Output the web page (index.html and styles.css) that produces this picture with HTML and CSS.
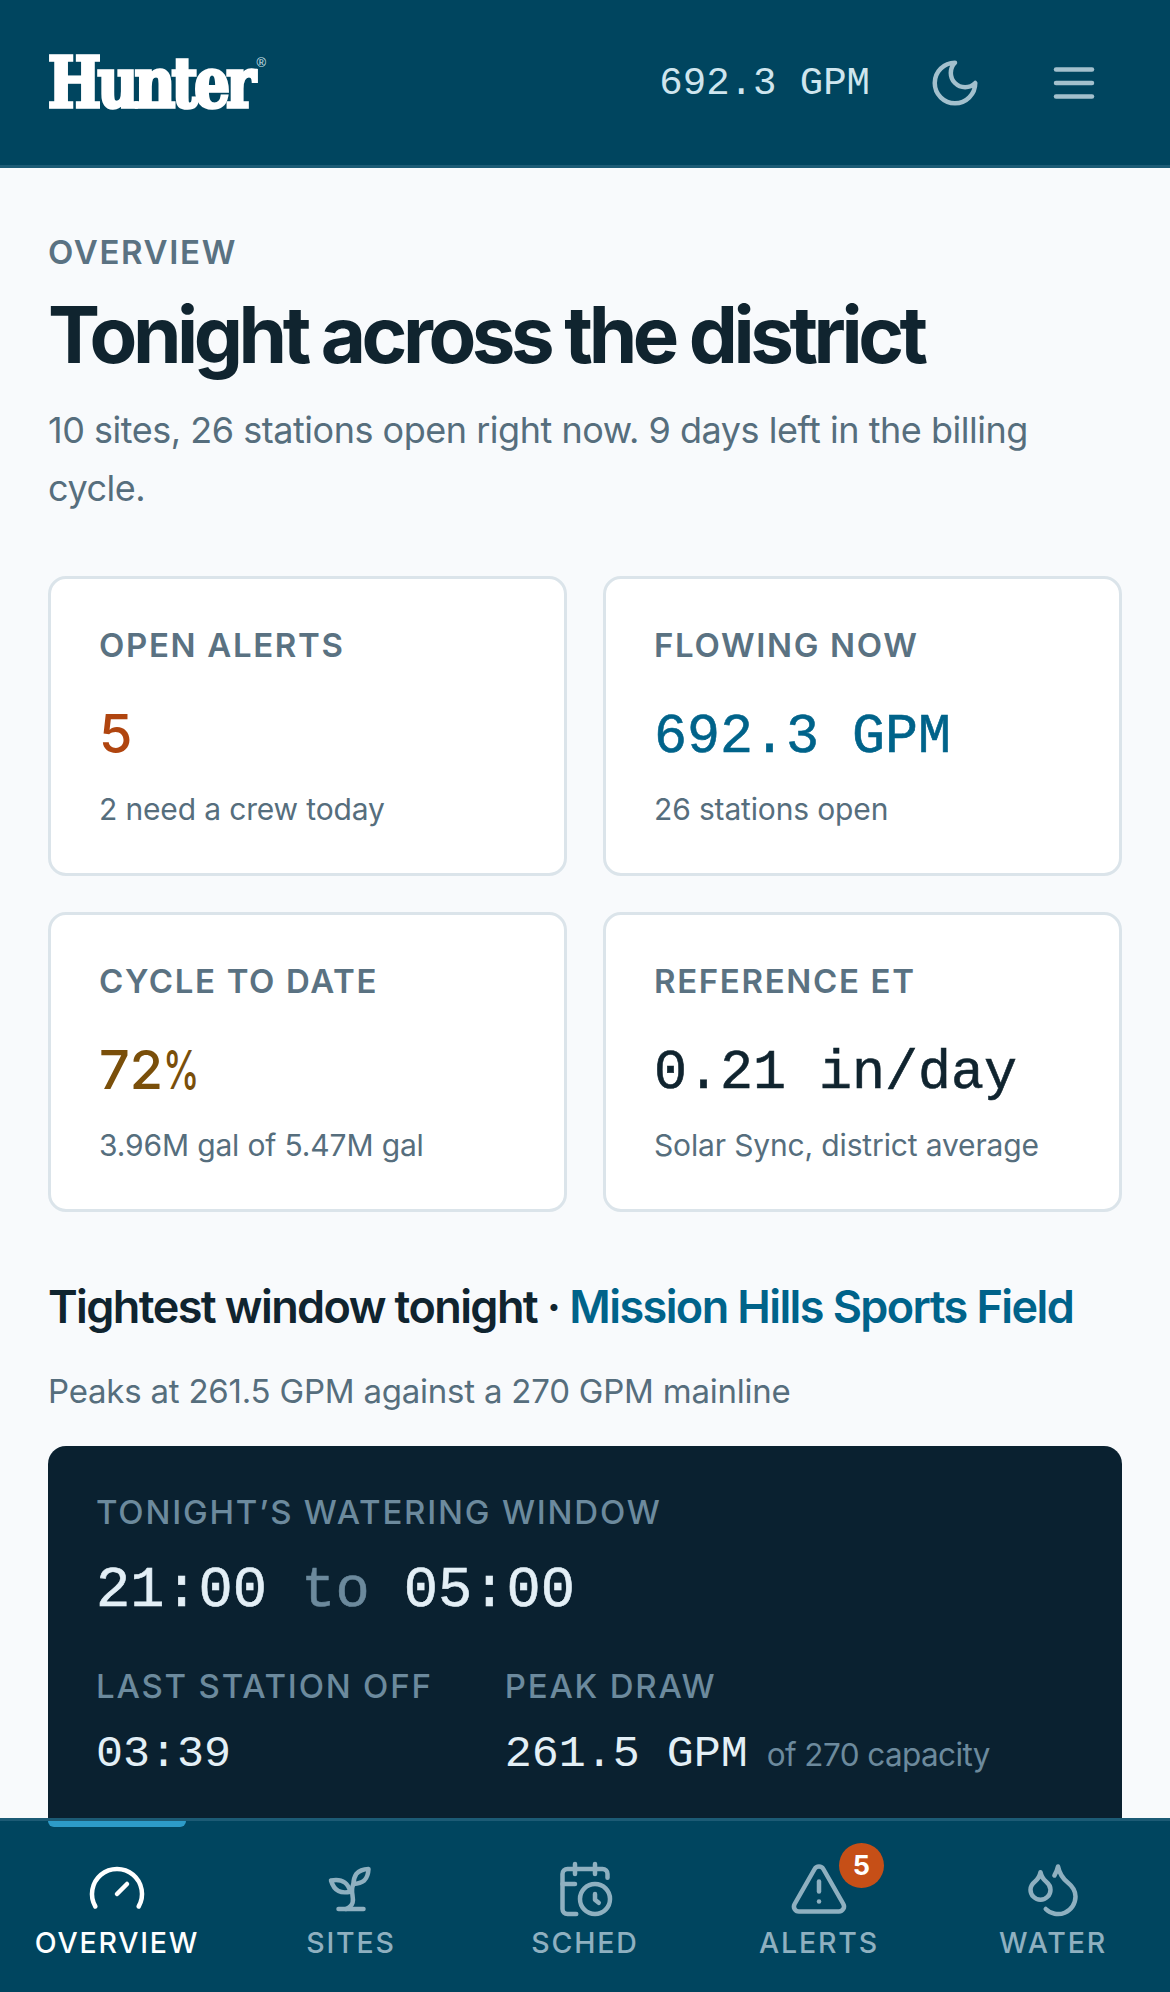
FILE: index.html
```html
<!DOCTYPE html>
<html lang="en">
<head>
  <meta charset="UTF-8" />
  <meta name="viewport" content="width=device-width, initial-scale=1" />
  <title>Hunter District Overview</title>
  <link rel="stylesheet" href="styles.css">
</head>
<body>
  <div class="app">
    <header class="topbar">
      <div class="logo"><span class="logo-word">Hunter</span><span class="logo-mark">®</span></div>
      <div class="topbar-right">
        <span class="topbar-flow">692.3 GPM</span>
        <svg class="topbar-icon" viewBox="0 0 24 24"><path d="M12 3a6 6 0 0 0 9 9 9 9 0 1 1-9-9Z"/></svg>
        <svg class="topbar-icon" viewBox="0 0 24 24"><path d="M4 6h16"/><path d="M4 12h16"/><path d="M4 18h16"/></svg>
      </div>
    </header>

    <main class="content">
      <p class="eyebrow">Overview</p>
      <h1>Tonight across the district</h1>
      <p class="lede">10 sites, 26 stations open right now. 9 days left in the billing cycle.</p>

      <section class="stats">
        <div class="stat">
          <div class="stat-label">Open alerts</div>
          <div class="stat-value alert">5</div>
          <div class="stat-note">2 need a crew today</div>
        </div>
        <div class="stat">
          <div class="stat-label">Flowing now</div>
          <div class="stat-value mono flow">692.3 GPM</div>
          <div class="stat-note">26 stations open</div>
        </div>
        <div class="stat">
          <div class="stat-label">Cycle to date</div>
          <div class="stat-value cycle">72<span class="pct">%</span></div>
          <div class="stat-note">3.96M gal of 5.47M gal</div>
        </div>
        <div class="stat">
          <div class="stat-label">Reference ET</div>
          <div class="stat-value mono">0.21 in/day</div>
          <div class="stat-note">Solar Sync, district average</div>
        </div>
      </section>

      <h2>Tightest window tonight · <a href="#">Mission Hills Sports Field</a></h2>
      <p class="section-note">Peaks at 261.5 GPM against a 270 GPM mainline</p>

      <section class="window">
        <div class="window-label">Tonight’s watering window</div>
        <div class="window-time">21:00 <span class="dim">to</span> 05:00</div>
        <div class="window-row">
          <div>
            <div class="window-label">Last station off</div>
            <div class="window-value">03:39</div>
          </div>
          <div>
            <div class="window-label">Peak draw</div>
            <div class="window-value">261.5 GPM<span class="window-cap">of 270 capacity</span></div>
          </div>
        </div>
      </section>
    </main>

    <nav class="tabs">
      <a class="tab active" href="#">
        <svg class="tab-icon" viewBox="0 0 24 24"><path d="m12 14 4-4"/><path d="M3.34 19a10 10 0 1 1 17.32 0"/></svg>
        Overview
      </a>
      <a class="tab" href="#">
        <svg class="tab-icon" viewBox="0 0 24 24"><path d="M7 20h10"/><path d="M10 20c5.5-2.5.8-6.4 3-10"/><path d="M9.5 9.4c1.1.8 1.8 2.2 2.3 3.7-2 .4-3.5.4-4.8-.3-1.2-.6-2.3-1.9-3-4.2 2.8-.5 4.4 0 5.5.8z"/><path d="M14.1 6a7 7 0 0 0-1.1 4c1.9-.1 3.3-.6 4.3-1.4 1-1 1.6-2.3 1.7-4.6-2.7.1-4 1-4.9 2z"/></svg>
        Sites
      </a>
      <a class="tab" href="#">
        <svg class="tab-icon" viewBox="0 0 24 24"><path d="M21 7.5V6a2 2 0 0 0-2-2H5a2 2 0 0 0-2 2v14a2 2 0 0 0 2 2h3.5"/><path d="M16 2v4"/><path d="M8 2v4"/><path d="M3 10h5"/><path d="M17.5 17.5 16 16.3V14"/><circle cx="16" cy="16" r="6"/></svg>
        Sched
      </a>
      <a class="tab" href="#">
        <span class="tab-icon-wrap">
          <svg class="tab-icon" viewBox="0 0 24 24"><path d="m21.73 18-8-14a2 2 0 0 0-3.48 0l-8 14A2 2 0 0 0 4 21h16a2 2 0 0 0 1.73-3"/><path d="M12 9v4"/><path d="M12 17h.01"/></svg>
          <span class="badge">5</span>
        </span>
        Alerts
      </a>
      <a class="tab" href="#">
        <svg class="tab-icon" viewBox="0 0 24 24"><path d="M7 16.3c2.2 0 4-1.83 4-4.05 0-1.16-.57-2.26-1.71-3.19S7.29 6.75 7 5.3c-.29 1.45-1.14 2.84-2.29 3.76S3 11.1 3 12.25c0 2.22 1.8 4.05 4 4.05z"/><path d="M12.56 6.6A10.97 10.97 0 0 0 14 3.02c.5 2.5 2 4.9 4 6.5s3 3.5 3 5.5a6.98 6.98 0 0 1-11.91 4.97"/></svg>
        Water
      </a>
    </nav>
  </div>
</body>
</html>
```

FILE: styles.css
```css
* {
  box-sizing: border-box;
}
body {
  margin: 0;
  font-family: Inter, "Liberation Sans", sans-serif;
  background: #f8fafc;
  color: #10242f;
}
.app {
  display: flex;
  flex-direction: column;
  height: 100vh;
  overflow: hidden;
}
.mono {
  font-family: "Liberation Mono", monospace;
}

/* top bar */
.topbar {
  flex: none;
  height: 168px;
  padding: 0 48px;
  display: flex;
  align-items: center;
  justify-content: space-between;
  background: #00455f;
  border-bottom: 3px solid #1c5b75;
}
.logo {
  display: flex;
  align-items: flex-start;
  color: #fff;
}
.logo-word {
  font-family: "DejaVu Serif", serif;
  font-stretch: condensed;
  font-weight: 700;
  font-size: 70px;
  line-height: 62px;
  letter-spacing: -4px;
  -webkit-text-stroke: 3.5px #fff;
  transform: scaleX(0.89);
  transform-origin: left center;
}
.logo-mark {
  margin: 4px 0 0 -21px;
  font-family: "Liberation Sans", sans-serif;
  font-size: 13px;
  line-height: 14px;
  color: #d4e6ee;
}
.topbar-right {
  display: flex;
  align-items: center;
  gap: 65px;
  margin-right: 21px;
}
.topbar-flow {
  margin-right: -7px;
  font-family: "Liberation Mono", monospace;
  font-size: 39px;
  line-height: 54px;
  padding-top: 3px;
  color: #cfe5ee;
}
.topbar-icon {
  width: 54px;
  height: 54px;
  fill: none;
  stroke: #a3c0cd;
  stroke-width: 2;
  stroke-linecap: round;
  stroke-linejoin: round;
}

/* page content */
.content {
  flex: 1;
  min-height: 0;
  overflow: hidden;
  padding: 66px 48px 0;
}
.eyebrow {
  margin: 0;
  font-size: 33px;
  line-height: 36px;
  font-weight: 600;
  letter-spacing: 1.65px;
  text-transform: uppercase;
  color: #5a7282;
}
h1 {
  margin: 23px 0 0;
  font-size: 78px;
  line-height: 84px;
  font-weight: 700;
  letter-spacing: -4.45px;
  color: #10242f;
}
.lede {
  margin: 25px 0 0;
  font-size: 36px;
  line-height: 57.6px;
  letter-spacing: -0.48px;
  color: #566e7d;
}

.stats {
  margin-top: 59px;
  display: grid;
  grid-template-columns: 1fr 1fr;
  gap: 36px;
}
.stat {
  height: 300px;
  padding: 48px;
  background: #fff;
  border: 3px solid #dbe4ea;
  border-radius: 18px;
}
.stat-label {
  font-size: 33px;
  line-height: 36px;
  font-weight: 600;
  letter-spacing: 1.65px;
  text-transform: uppercase;
  color: #5a7282;
}
.stat-value {
  margin-top: 38px;
  font-size: 54px;
  line-height: 66px;
  font-weight: 500;
  color: #10242f;
}
.stat-value.mono {
  font-size: 55px;
  padding-top: 4px;
  margin-bottom: -4px;
  -webkit-text-stroke: 0.6px currentColor;
}
.stat-value.alert {
  color: #b0450f;
}
.stat-value.flow {
  color: #00638a;
}
.stat-value.cycle {
  color: #7a4f0a;
}
.pct {
  display: inline-block;
  transform: scaleX(0.68);
  transform-origin: left center;
}
.stat-note {
  margin-top: 21px;
  font-size: 30px;
  line-height: 42px;
  letter-spacing: -0.15px;
  color: #566e7d;
}

h2 {
  margin: 65px 0 0;
  font-size: 45px;
  line-height: 60px;
  font-weight: 600;
  letter-spacing: -1.6px;
  color: #10242f;
}
h2 a {
  color: #00638a;
  text-decoration: none;
}
.section-note {
  margin: 30px 0 0;
  font-size: 33px;
  line-height: 48px;
  letter-spacing: -0.22px;
  color: #566e7d;
}

/* dark card, runs under the tab bar */
.window {
  margin-top: 31px;
  height: 480px;
  padding: 48px;
  background: #0a2130;
  border-radius: 18px;
}
.window-label {
  font-size: 33px;
  line-height: 36px;
  font-weight: 500;
  letter-spacing: 1.8px;
  text-transform: uppercase;
  color: #6c8a9d;
}
.window-time {
  margin-top: 25px;
  font-family: "Liberation Mono", monospace;
  font-size: 57px;
  line-height: 72px;
  color: #e3eff6;
  -webkit-text-stroke: 0.6px currentColor;
}
.dim {
  color: #6c8a9d;
}
.window-row {
  margin-top: 41px;
  display: flex;
  gap: 72px;
}
.window-value {
  margin-top: 21px;
  font-family: "Liberation Mono", monospace;
  font-size: 45px;
  line-height: 60px;
  color: #e3eff6;
}
.window-cap {
  margin-left: 19px;
  font-family: Inter, "Liberation Sans", sans-serif;
  font-size: 31.5px;
  letter-spacing: -0.6px;
  color: #6c8a9d;
}

/* bottom tabs */
.tabs {
  flex: none;
  height: 174px;
  display: grid;
  grid-template-columns: repeat(5, 1fr);
  background: #00455f;
  border-top: 3px solid #1c5b75;
}
.tab {
  position: relative;
  display: flex;
  flex-direction: column;
  align-items: center;
  padding-top: 38px;
  gap: 6px;
  font-size: 28.5px;
  line-height: 36px;
  font-weight: 500;
  letter-spacing: 1.8px;
  text-transform: uppercase;
  text-decoration: none;
  color: #8fb0c0;
}
.tab.active {
  color: #fff;
}
.tab.active::before {
  content: "";
  position: absolute;
  top: 0;
  left: 48px;
  right: 48px;
  height: 6px;
  background: #2d9bc8;
  border-radius: 0 0 6px 6px;
}
.tab-icon-wrap {
  position: relative;
  display: flex;
}
.tab-icon {
  width: 60px;
  height: 60px;
  fill: none;
  stroke: currentColor;
  stroke-width: 1.8;
  stroke-linecap: round;
  stroke-linejoin: round;
}
.badge {
  position: absolute;
  top: -16px;
  right: -35px;
  width: 45px;
  height: 45px;
  border-radius: 50%;
  background: #c64f17;
  color: #fff;
  font-size: 27px;
  line-height: 45px;
  font-weight: 700;
  letter-spacing: 0;
  text-align: center;
}
```
